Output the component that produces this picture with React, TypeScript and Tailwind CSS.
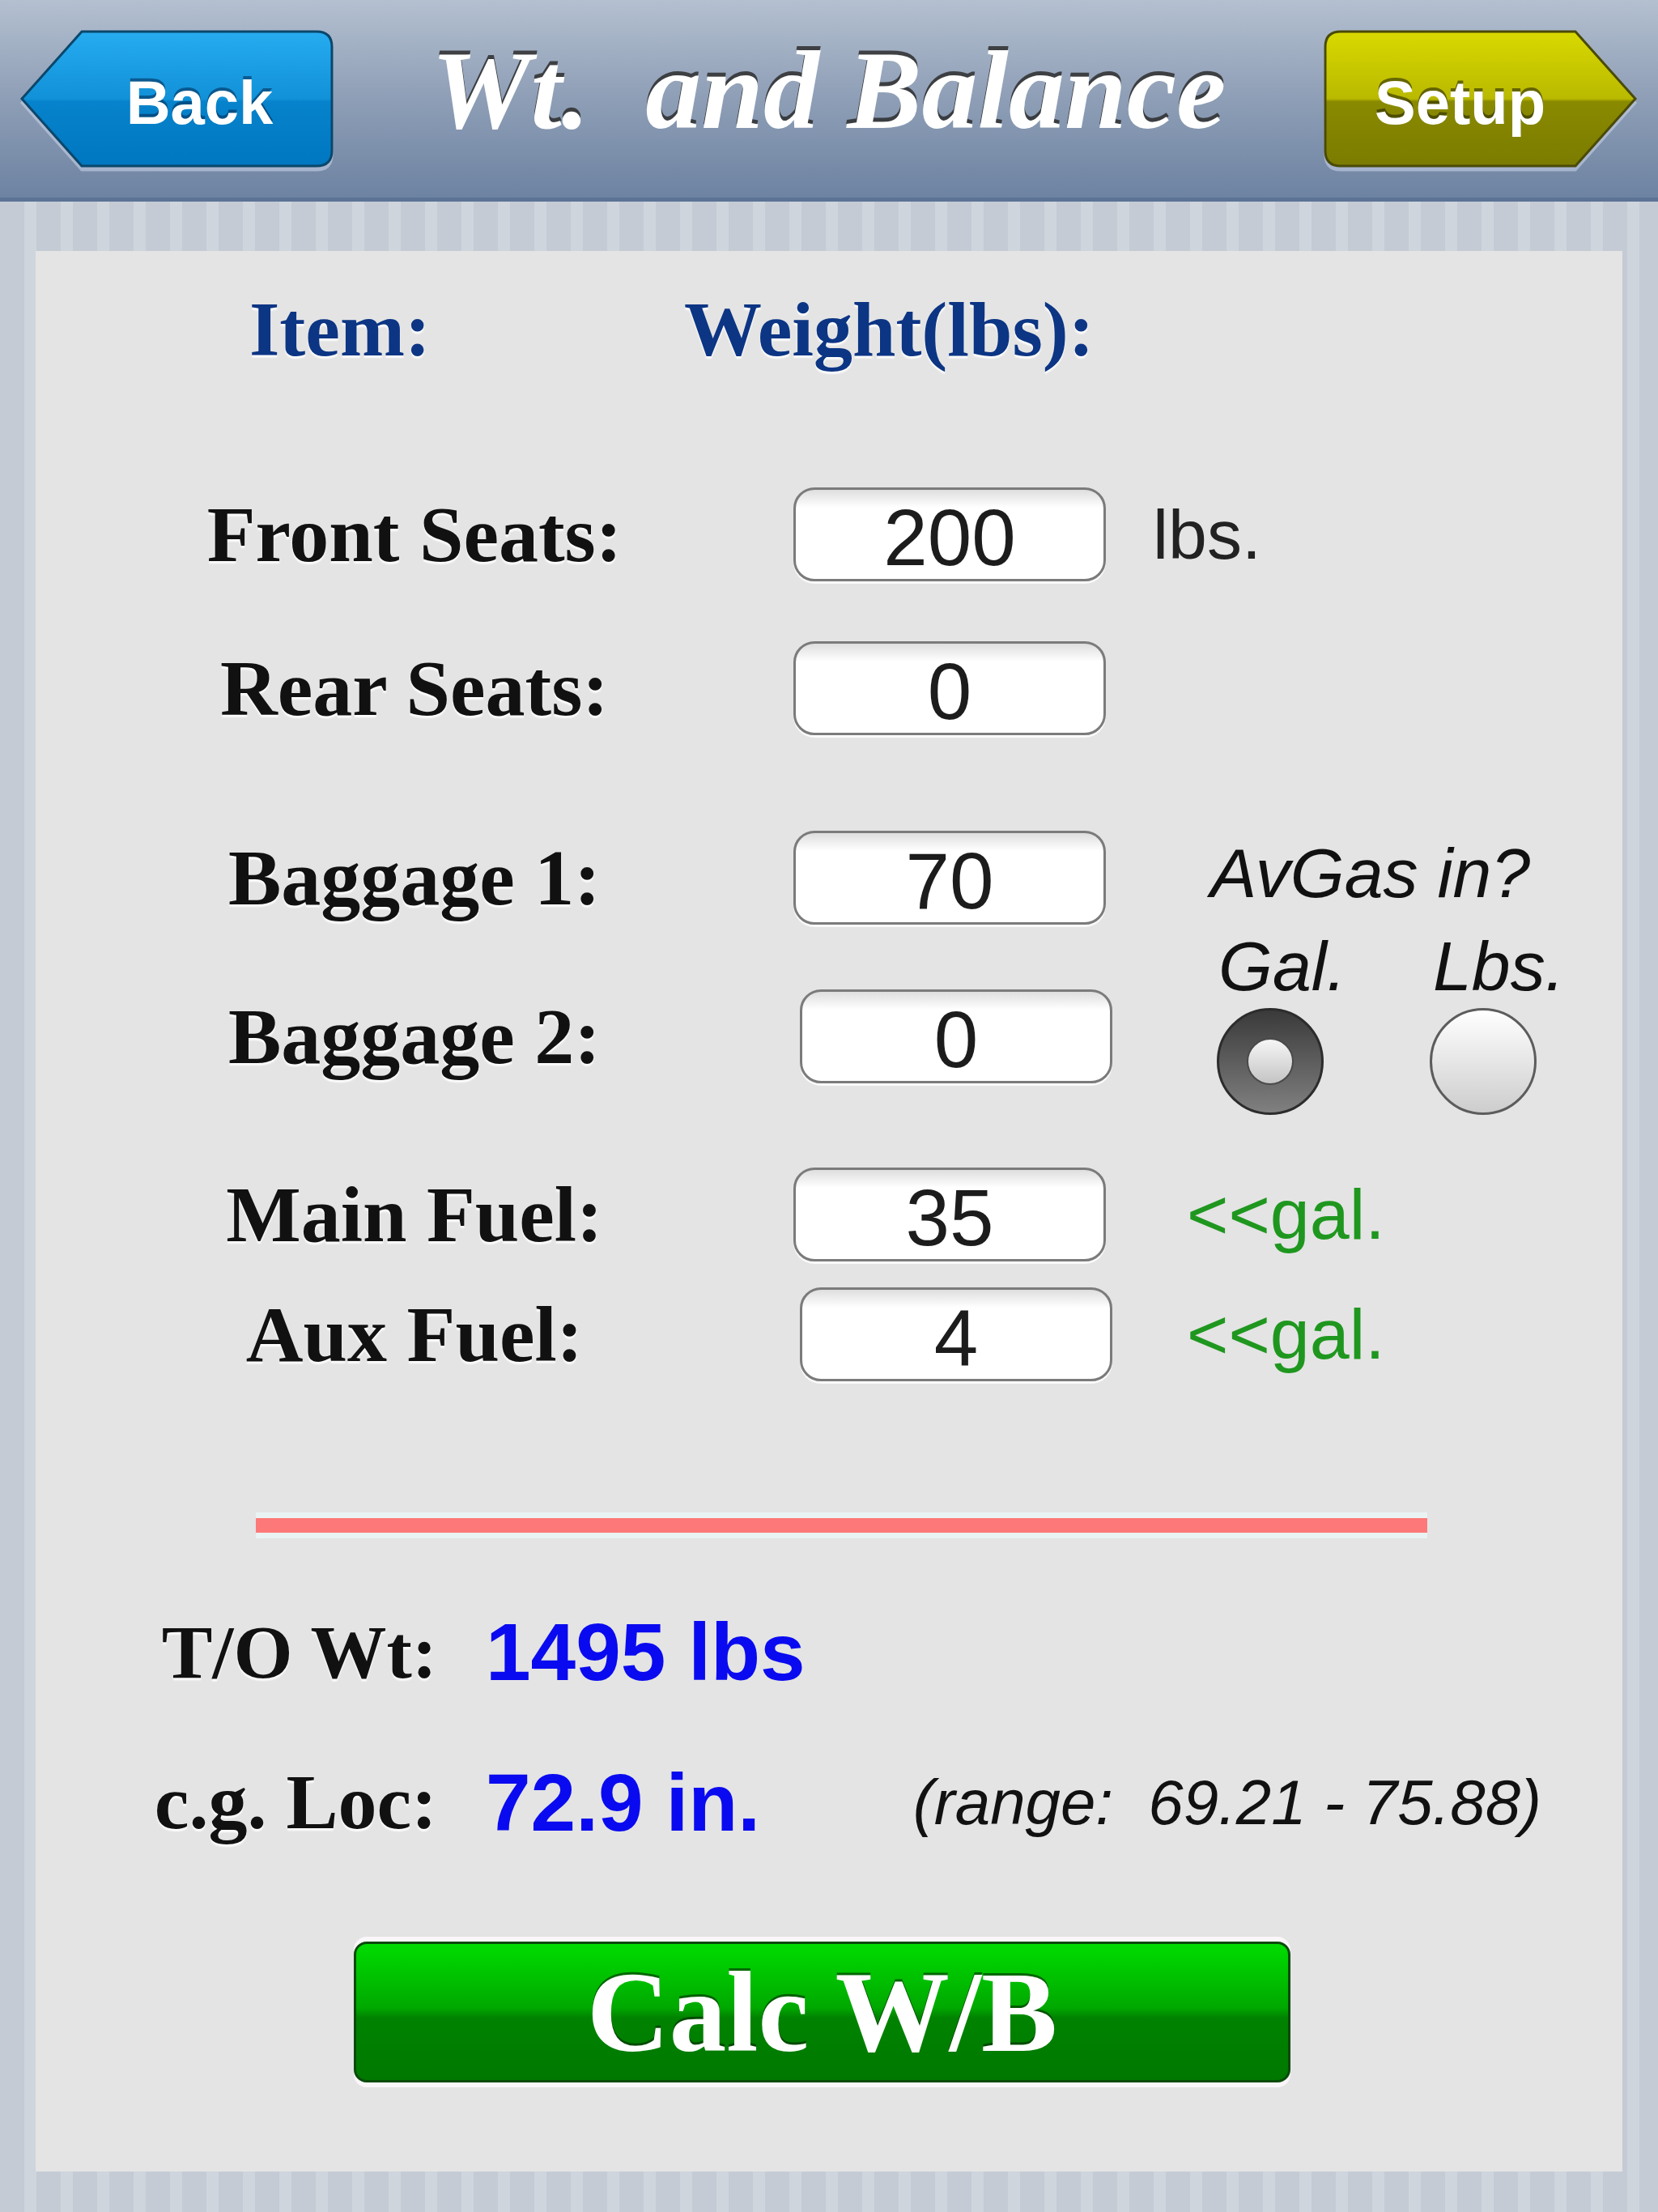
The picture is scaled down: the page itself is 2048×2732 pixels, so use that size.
import React from 'react';

const serif = "font-['Liberation_Serif',serif]";
const sans = "font-['Liberation_Sans',Arial,sans-serif]";

function BackButton() {
  return (
    <div className="relative w-[387px] h-[170px]">
      <svg className="absolute inset-0 [filter:drop-shadow(0_5px_0_rgba(205,215,235,0.55))]" width="387" height="170" viewBox="0 0 387 170">
        <defs>
          <linearGradient id="gBack" x1="0" y1="0" x2="0" y2="1">
            <stop offset="0" stopColor="#27acf0" />
            <stop offset="0.5" stopColor="#1191d8" />
            <stop offset="0.52" stopColor="#0683cc" />
            <stop offset="1" stopColor="#0077c0" />
          </linearGradient>
        </defs>
        <path d="M76 2 H366 Q385 2 385 21 V149 Q385 168 366 168 H76 L2 85 Z" fill="url(#gBack)" stroke="#0b476b" strokeWidth="3" />
      </svg>
      <div className="relative flex h-full items-center justify-center pl-[56px] pt-[10px] text-[76px] font-bold leading-none text-white [text-shadow:0_-4px_0_rgba(0,40,80,0.55)]">
        Back
      </div>
    </div>
  );
}

function SetupButton() {
  return (
    <div className="relative w-[387px] h-[170px]">
      <svg className="absolute inset-0 [filter:drop-shadow(0_5px_0_rgba(205,215,235,0.55))]" width="387" height="170" viewBox="0 0 387 170">
        <defs>
          <linearGradient id="gSetup" x1="0" y1="0" x2="0" y2="1">
            <stop offset="0" stopColor="#d9d900" />
            <stop offset="0.5" stopColor="#b9b900" />
            <stop offset="0.52" stopColor="#8a8a00" />
            <stop offset="1" stopColor="#7b7b00" />
          </linearGradient>
        </defs>
        <path d="M21 2 H311 L385 85 L311 168 H21 Q2 168 2 149 V21 Q2 2 21 2 Z" fill="url(#gSetup)" stroke="#4a4a08" strokeWidth="3" />
      </svg>
      <div className="relative flex h-full items-center justify-center pr-[50px] pt-[10px] text-[76px] font-bold leading-none text-white [text-shadow:0_-4px_0_rgba(40,40,0,0.6)]">
        Setup
      </div>
    </div>
  );
}

function Field({ value, shifted }: { value: string; shifted?: boolean }) {
  return (
    <div
      className={`${shifted ? 'ml-[8px]' : ''} flex h-[116px] w-[386px] items-center justify-center rounded-[26px] border-[3px] border-[#7b7b7b] bg-[linear-gradient(#dedede,#ffffff_22px)] pt-[8px] ${sans} text-[98px] leading-none text-[#1c1c1c] shadow-[0_3px_0_rgba(255,255,255,0.8)]`}
    >
      {value}
    </div>
  );
}

function Label({ children }: { children: React.ReactNode }) {
  return (
    <div className={`w-[936px] text-center ${serif} text-[98px] font-bold leading-none text-[#111] [text-shadow:0_3px_2px_rgba(255,255,255,0.9)]`}>
      {children}
    </div>
  );
}

function Radio({ checked }: { checked?: boolean }) {
  if (checked) {
    return (
      <div className="flex h-[132px] w-[132px] items-center justify-center rounded-full border-[3px] border-[#2c2c2c] bg-[linear-gradient(#3a3a3a,#808080)]">
        <div className="h-[58px] w-[58px] rounded-full border-2 border-[#4a4a4a] bg-[linear-gradient(#f6f6f6,#c4c4c4)]" />
      </div>
    );
  }
  return <div className="h-[132px] w-[132px] rounded-full border-[3px] border-[#5c5c5c] bg-[linear-gradient(#ffffff,#cdcdcd)]" />;
}

export default function App() {
  return (
    <div className={`w-[2048px] min-h-[2732px] bg-[repeating-linear-gradient(90deg,#c4cbd5_0px,#c4cbd5_30px,#ced5dd_30px,#ced5dd_45px)] ${sans}`}>
      {/* Toolbar */}
      <div className="flex h-[249px] items-start justify-between border-b-[5px] border-[#5c7396] bg-[linear-gradient(#b4c0d0,#8e9eb6_50%,#6d83a2)] pl-[25px] pr-[26px] pt-[37px]">
        <BackButton />
        <div className={`flex-1 mt-[6px] text-center ${serif} text-[138px] font-bold italic leading-none text-white [text-shadow:0_-5px_0_rgba(45,45,45,0.85)]`}>
          Wt.&nbsp; and Balance
        </div>
        <SetupButton />
      </div>

      {/* Panel */}
      <div className="mx-[44px] mt-[61px] w-[1960px] bg-[#e4e4e4] pt-[39px] pb-[110px]">
        <div className={`flex h-[116px] items-center ${serif} text-[96px] font-bold leading-none text-[#0c3584] [text-shadow:0_3px_2px_rgba(255,255,255,0.9)]`}>
          <span className="ml-[264px] inline-block w-[537px]">Item:</span>
          <span>Weight(lbs):</span>
        </div>

        <div className="mt-[137px] flex h-[116px] items-center">
          <Label>Front Seats:</Label>
          <Field value="200" />
          <span className="ml-[58px] text-[86px] leading-none text-[#222]">lbs.</span>
        </div>

        <div className="mt-[74px] flex h-[116px] items-center">
          <Label>Rear Seats:</Label>
          <Field value="0" />
        </div>

        <div className="mt-[118px] flex">
          <div className="flex flex-col">
            <div className="flex h-[116px] items-center">
              <Label>Baggage 1:</Label>
              <Field value="70" />
            </div>
            <div className="mt-[80px] flex h-[116px] items-center">
              <Label>Baggage 2:</Label>
              <Field value="0" shifted />
            </div>
          </div>
          <div className="ml-[121px] flex flex-col text-[86px] italic leading-none text-[#111]">
            <div className="flex h-[104px] items-center">AvGas in?</div>
            <div className="mt-[20px] grid h-[80px] grid-cols-[265px_265px] items-center">
              <span className="pl-[10px]">Gal.</span>
              <span className="pl-[10px]">Lbs.</span>
            </div>
            <div className="mt-[15px] grid grid-cols-[265px_265px]">
              <div className="pl-[8px]">
                <Radio checked />
              </div>
              <div className="pl-[6px]">
                <Radio />
              </div>
            </div>
          </div>
        </div>

        <div className="mt-[65px] flex h-[116px] items-center">
          <Label>Main Fuel:</Label>
          <Field value="35" />
          <span className="ml-[100px] text-[88px] leading-none text-[#1f971f]">&lt;&lt;gal.</span>
        </div>

        <div className="mt-[32px] flex h-[116px] items-center">
          <Label>Aux Fuel:</Label>
          <Field value="4" shifted />
          <span className="ml-[92px] text-[88px] leading-none text-[#1f971f]">&lt;&lt;gal.</span>
        </div>

        <div className="mt-[162px] ml-[272px] box-content h-[18px] w-[1447px] border-y-[7px] border-[#eaf3f3] bg-[#fd7878]" />

        <div className="mt-[82px] flex h-[116px] items-center">
          <div className={`w-[496px] text-right ${serif} text-[94px] font-bold leading-none text-[#111] [text-shadow:0_3px_2px_rgba(255,255,255,0.9)]`}>T/O Wt:</div>
          <span className="ml-[60px] text-[100px] font-bold leading-none text-[#0a0af0]">1495 lbs</span>
        </div>

        <div className="mt-[70px] flex h-[116px] items-center">
          <div className={`w-[496px] text-right ${serif} text-[96px] font-bold leading-none text-[#111] [text-shadow:0_3px_2px_rgba(255,255,255,0.9)]`}>c.g. Loc:</div>
          <span className="ml-[60px] text-[100px] font-bold leading-none text-[#0a0af0]">72.9 in.</span>
          <span className="ml-auto mr-[100px] text-[78px] italic leading-none text-[#111]">(range:&nbsp; 69.21 - 75.88)</span>
        </div>

        <div className={`mt-[114px] ml-[393px] flex h-[174px] w-[1157px] items-center justify-center rounded-[16px] border-[3px] border-[#0b4a0b] bg-[linear-gradient(#00dc00,#00a800_47%,#008300_54%,#007800)] shadow-[0_-6px_0_#faf6fa,0_6px_0_#faf6fa] ${serif} text-[141px] font-bold leading-none text-white [text-shadow:0_-3px_0_rgba(0,40,0,0.6)]`}>
          Calc W/B
        </div>
      </div>
    </div>
  );
}
